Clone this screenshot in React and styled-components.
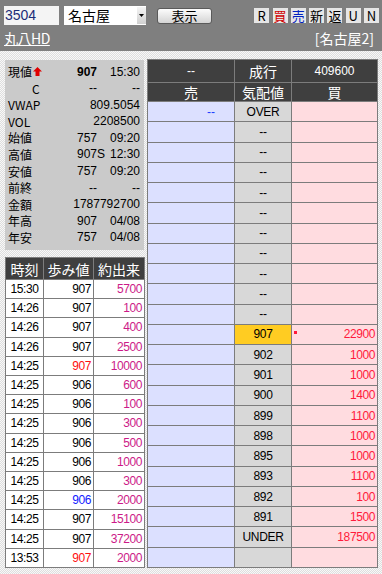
import React from 'react'

import styled, { createGlobalStyle } from 'styled-components'

const GlobalStyle = createGlobalStyle`
	html, body {
		margin: 0;
		padding: 0;
	}
	body {
		font-family: 'Liberation Sans', 'Noto Sans CJK JP', sans-serif;
		background-color: #f6f6f6;
		background-image: repeating-conic-gradient(#dedede 0 25%, #f8f8f8 0 50%);
		background-size: 2px 2px;
	}
`

const Page = styled.div`
	width: 382px;
	height: 574px;
	overflow: hidden;
`

const TopBar = styled.div`
	height: 51px;
	background: #7f7f7f;
	box-sizing: border-box;
	padding: 6px 3px 0 4px;
`

const TopRow = styled.div`
	display: flex;
	align-items: center;
	height: 19px;
`

const CodeInput = styled.div`
	width: 55px;
	height: 19px;
	background: #f4f4f4;
	color: #1c2c78;
	font-size: 14px;
	line-height: 19px;
	padding-left: 1px;
	box-sizing: border-box;
`

const Select = styled.div`
	margin-left: 5px;
	width: 82px;
	height: 19px;
	background: #ffffff;
	display: flex;
	font-size: 14px;
	line-height: 19px;
	box-sizing: border-box;
`

const SelectText = styled.span`
	flex: 1;
	padding-left: 4px;
	font-family: 'Noto Sans CJK JP', sans-serif;
`

const SelectArrow = styled.span`
	width: 9px;
	margin: 1px 0;
	background: linear-gradient(#f4f4f4, #d0d0d0);
	display: flex;
	align-items: center;
	justify-content: center;
`

const ShowButton = styled.div`
	margin-left: 11px;
	width: 55px;
	height: 16px;
	border: 1px solid #5a5a5a;
	border-radius: 3px;
	box-sizing: border-box;
	background: linear-gradient(#fcfcfc, #d4d4d4);
	font-family: 'Noto Sans CJK JP', sans-serif;
	font-size: 13px;
	line-height: 14px;
	text-align: center;
`

const SmallButtons = styled.div`
	margin-left: auto;
	display: flex;
	gap: 3.3px;
`

const SmallButton = styled.div`
	width: 15px;
	height: 15px;
	background: #e6e6e6;
	color: ${p => p.color || '#000'};
	font-family: 'Noto Sans CJK JP', sans-serif;
	font-size: 13px;
	line-height: 15px;
	text-align: center;
`

const NameRow = styled.div`
	display: flex;
	justify-content: space-between;
	align-items: center;
	margin-top: 5px;
	color: #ffffff;
	font-family: 'Noto Sans CJK JP', sans-serif;
	font-size: 14px;
	line-height: 17px;
`

const StockName = styled.span`
	text-decoration: underline;
	text-underline-offset: 1px;
	letter-spacing: -0.5px;
`

const Market = styled.span`
	margin-right: 5px;
`

const Main = styled.div`
	display: flex;
	gap: 2px;
	padding: 8px 0 0 5px;
`

const LeftColumn = styled.div`
	width: 140px;
	display: flex;
	flex-direction: column;
	gap: 7px;
`

const InfoPanel = styled.div`
	margin-top: 1px;
	width: 139px;
	height: 190px;
	background: #cacaca;
	box-sizing: border-box;
	padding: 3px 4px 0 3px;
`

const InfoRow = styled.div`
	display: grid;
	grid-template-columns: 49px 40px 7px 36px;
	height: 16.6px;
	align-items: center;
	font-size: 12px;
`

const InfoLabel = styled.span`
	font-family: 'Noto Sans CJK JP', sans-serif;
	font-size: 12px;
	padding-left: ${p => (p.indent ? '24px' : '0')};
	display: flex;
	align-items: center;
	gap: 1px;
`

const InfoValue = styled.span`
	text-align: right;
	font-weight: ${p => (p.bold ? 'bold' : 'normal')};
	grid-column: ${p => (p.wide ? '2 / -1' : 'auto')};
`

const InfoMark = styled.span`
	text-align: left;
`

const TradeTable = styled.div`
	display: grid;
	grid-template-columns: 37px 49px 50px;
	grid-template-rows: 21px repeat(15, 1fr);
	gap: 1px;
	padding: 1px;
	height: 311px;
	box-sizing: border-box;
	background: #7c7c7c;
`

const HeadCell = styled.div`
	background: #3f3f3f;
	color: #ffffff;
	font-family: 'Noto Sans CJK JP', sans-serif;
	font-size: 14px;
	display: flex;
	align-items: center;
	justify-content: center;
`

const TradeCell = styled.div`
	background: #ffffff;
	color: ${p => p.color || '#000'};
	font-size: 12px;
	letter-spacing: -0.4px;
	display: flex;
	align-items: center;
	justify-content: ${p => (p.center ? 'center' : 'flex-end')};
	padding-right: ${p => (p.center ? '0' : '2px')};
`

const Board = styled.div`
	display: grid;
	grid-template-columns: 86px 56px 85px;
	grid-template-rows: 22px 18px repeat(23, 1fr);
	gap: 1px;
	padding: 1px;
	width: 231px;
	height: 509px;
	box-sizing: border-box;
	background: #7c7c7c;
`

const BoardHeadNumber = styled(HeadCell)`
	font-family: 'Liberation Sans', sans-serif;
	font-size: 12px;
`

const SellCell = styled.div`
	background: #dce0ff;
	color: #1a3cff;
	font-size: 12px;
	display: flex;
	align-items: center;
	justify-content: flex-end;
	padding-right: 19px;
`

const PriceCell = styled.div`
	background: ${p => (p.current ? '#ffcc22' : '#d8d8d8')};
	font-size: 12px;
	letter-spacing: -0.3px;
	display: flex;
	align-items: center;
	justify-content: center;
`

const BuyCell = styled.div`
	background: #ffdce0;
	color: #ff1a3c;
	font-size: 12px;
	letter-spacing: -0.4px;
	display: flex;
	align-items: center;
	justify-content: space-between;
	padding: 0 2px;
`

const Dot = styled.span`
	width: 3px;
	height: 3px;
	margin-top: -4px;
	background: #ff1a3c;
	visibility: ${p => (p.show ? 'visible' : 'hidden')};
`

const UpArrow = () => (
	<svg width="9" height="9" viewBox="0 0 9 9">
		<path d="M4.5 0 L9 4.5 L6.5 4.5 L6.5 9 L2.5 9 L2.5 4.5 L0 4.5 Z" fill="#e00000" />
	</svg>
)

const DownTriangle = () => (
	<svg width="5" height="3" viewBox="0 0 5 3">
		<path d="M0 0 H5 L2.5 3 Z" fill="#000" />
	</svg>
)

const info = [
	{ label: '現値', value: '907', time: '15:30', bold: true, arrow: true },
	{ label: 'C', value: '--', time: '--', indent: true },
	{ label: 'VWAP', wide: '809.5054' },
	{ label: 'VOL', wide: '2208500' },
	{ label: '始値', value: '757', time: '09:20' },
	{ label: '高値', value: '907', mark: 'S', time: '12:30' },
	{ label: '安値', value: '757', time: '09:20' },
	{ label: '前終', value: '--', time: '--' },
	{ label: '金額', wide: '1787792700' },
	{ label: '年高', value: '907', time: '04/08' },
	{ label: '年安', value: '757', time: '04/08' },
]

const RED = '#ff1010'
const BLUE = '#1020ff'

const trades = [
	['15:30', '907', '5700'],
	['14:26', '907', '100'],
	['14:26', '907', '400'],
	['14:26', '907', '2500'],
	['14:25', '907', '10000', RED],
	['14:25', '906', '600'],
	['14:25', '906', '100'],
	['14:25', '906', '300'],
	['14:25', '906', '500'],
	['14:25', '906', '1000'],
	['14:25', '906', '300'],
	['14:25', '906', '2000', BLUE],
	['14:25', '907', '15100'],
	['14:25', '907', '37200'],
	['13:53', '907', '2000', RED],
]

const board = [
	{ sell: '--', price: 'OVER' },
	...Array.from({ length: 10 }, () => ({ price: '--' })),
	{ price: '907', buy: '22900', current: true },
	{ price: '902', buy: '1000' },
	{ price: '901', buy: '1000' },
	{ price: '900', buy: '1400' },
	{ price: '899', buy: '1100' },
	{ price: '898', buy: '1000' },
	{ price: '895', buy: '1000' },
	{ price: '893', buy: '1100' },
	{ price: '892', buy: '100' },
	{ price: '891', buy: '1500' },
	{ price: 'UNDER', buy: '187500' },
	{ price: '' },
]

const App = () => {
	return (
		<>
			<GlobalStyle />
			<Page>
				<TopBar>
					<TopRow>
						<CodeInput>3504</CodeInput>
						<Select>
							<SelectText>名古屋</SelectText>
							<SelectArrow>
								<DownTriangle />
							</SelectArrow>
						</Select>
						<ShowButton>表示</ShowButton>
						<SmallButtons>
							<SmallButton>R</SmallButton>
							<SmallButton color="#d00000">買</SmallButton>
							<SmallButton color="#0020c0">売</SmallButton>
							<SmallButton>新</SmallButton>
							<SmallButton>返</SmallButton>
							<SmallButton>U</SmallButton>
							<SmallButton>N</SmallButton>
						</SmallButtons>
					</TopRow>
					<NameRow>
						<StockName>丸八HD</StockName>
						<Market>[名古屋2]</Market>
					</NameRow>
				</TopBar>
				<Main>
					<LeftColumn>
						<InfoPanel>
							{info.map(row => (
								<InfoRow key={row.label}>
									<InfoLabel indent={row.indent}>
										{row.label}
										{row.arrow && <UpArrow />}
									</InfoLabel>
									{row.wide ? (
										<InfoValue wide>{row.wide}</InfoValue>
									) : (
										<>
											<InfoValue bold={row.bold}>{row.value}</InfoValue>
											<InfoMark>{row.mark}</InfoMark>
											<InfoValue>{row.time}</InfoValue>
										</>
									)}
								</InfoRow>
							))}
						</InfoPanel>
						<TradeTable>
							<HeadCell>時刻</HeadCell>
							<HeadCell>歩み値</HeadCell>
							<HeadCell>約出来</HeadCell>
							{trades.map(([time, price, qty, color], i) => (
								<React.Fragment key={i}>
									<TradeCell center>{time}</TradeCell>
									<TradeCell color={color}>{price}</TradeCell>
									<TradeCell color="#cc1a88">{qty}</TradeCell>
								</React.Fragment>
							))}
						</TradeTable>
					</LeftColumn>
					<Board>
						<BoardHeadNumber>--</BoardHeadNumber>
						<HeadCell>成行</HeadCell>
						<BoardHeadNumber>409600</BoardHeadNumber>
						<HeadCell>売</HeadCell>
						<HeadCell>気配値</HeadCell>
						<HeadCell>買</HeadCell>
						{board.map((row, i) => (
							<React.Fragment key={i}>
								<SellCell>{row.sell}</SellCell>
								<PriceCell current={row.current}>{row.price}</PriceCell>
								<BuyCell>
									<Dot show={row.current} />
									<span>{row.buy}</span>
								</BuyCell>
							</React.Fragment>
						))}
					</Board>
				</Main>
			</Page>
		</>
	)
}

export default App
